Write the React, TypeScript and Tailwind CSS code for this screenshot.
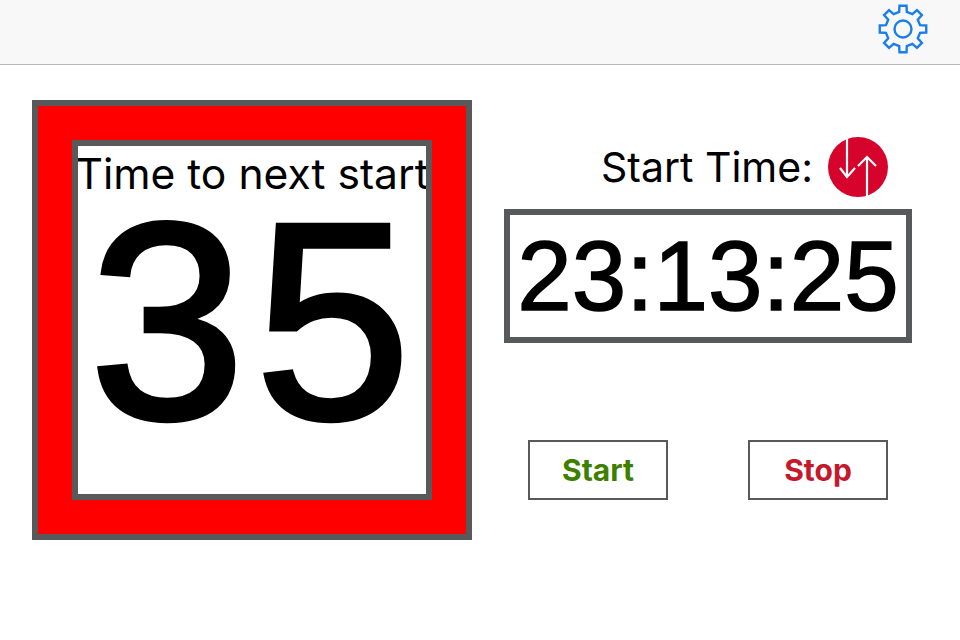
const gearPath = (() => {
  const cx = 25, cy = 25, teeth = 8;
  const pts: string[] = [];
  for (let i = 0; i < teeth; i++) {
    const a = (i * 2 * Math.PI) / teeth - Math.PI / 2;
    const add = (r: number, d: number) => {
      const t = a + d;
      pts.push(`${(cx + r * Math.cos(t)).toFixed(2)} ${(cy + r * Math.sin(t)).toFixed(2)}`);
    };
    add(17.5, -0.22);
    add(23.5, -0.15);
    add(23.5, 0.15);
    add(17.5, 0.22);
  }
  return "M" + pts.join("L") + "Z";
})();

export default function App() {
  return (
    <div className="w-[960px] h-[640px] bg-white overflow-hidden font-['Inter',sans-serif] text-black">
      <header className="h-[65px] bg-[#f8f8f8] border-b border-[#b8b8b8] flex items-center justify-end pr-[32px]">
        <svg width="50" height="50" viewBox="0 0 50 50" fill="none" stroke="#1a7fe8" strokeWidth="2.4" strokeLinejoin="miter" className="mb-[7px]">
          <path d={gearPath} />
          <circle cx="25" cy="25" r="8.5" />
        </svg>
      </header>
      <main className="flex pl-[32px] pt-[35px]">
        <div className="w-[440px] h-[440px] shrink-0 bg-[#ff0000] border-[6px] border-[#58595b] flex items-center justify-center">
          <div className="w-[360px] h-[360px] bg-white border-[6px] border-[#58595b] flex flex-col items-center overflow-hidden">
            <div className="text-[42.6px] leading-[52px] whitespace-nowrap mt-[2px]">Time to next start</div>
            <div className="font-['Liberation_Sans',sans-serif] text-[280px] leading-[221px] tracking-[10px] pl-[6px] mt-[11px] [-webkit-text-stroke:5px_black]">35</div>
          </div>
        </div>
        <div className="ml-[32px] w-[408px] flex flex-col">
          <div className="flex items-center justify-end h-[60px] mt-[37px] pr-[24px] gap-[15px]">
            <span className="text-[41px] leading-none">Start Time:</span>
            <svg width="60" height="60" viewBox="0 0 60 60" fill="none" className="shrink-0">
              <circle cx="30" cy="30" r="30" fill="#d6042c" />
              <g stroke="#fff" strokeWidth="2.2" fill="none">
                <path d="M19 1V40" />
                <path d="M12 31L19 40L27 31" />
                <path d="M39 59V20" />
                <path d="M30 29L39 20L48 29" />
              </g>
            </svg>
          </div>
          <div className="mt-[12px] h-[134px] border-[6px] border-[#58595b] flex items-center justify-center font-['Liberation_Sans',sans-serif] text-[98px] leading-none whitespace-nowrap [-webkit-text-stroke:1.5px_black]">
            23:13:25
          </div>
          <div className="mt-[97px] flex pl-[24px] gap-[80px]">
            <button className="w-[140px] h-[60px] border-2 border-[#58595b] text-[30px] font-bold text-[#3f7f00]">Start</button>
            <button className="w-[140px] h-[60px] border-2 border-[#58595b] text-[30px] font-bold text-[#c4182c]">Stop</button>
          </div>
        </div>
      </main>
    </div>
  );
}
